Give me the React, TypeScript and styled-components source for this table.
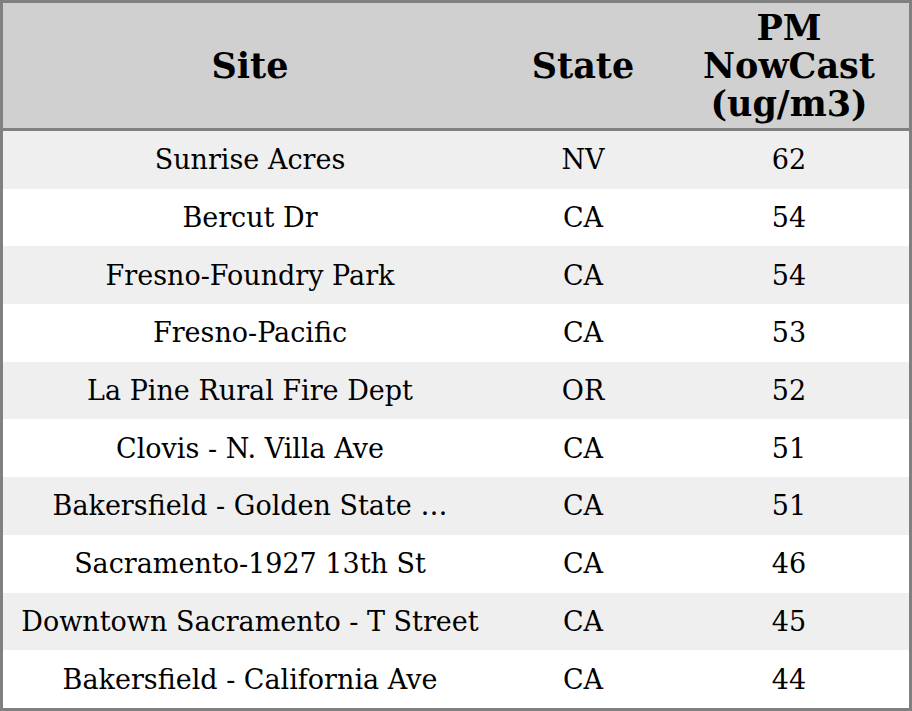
import styled, { createGlobalStyle } from 'styled-components';

const rows = [
  { site: 'Sunrise Acres', state: 'NV', pm: 62 },
  { site: 'Bercut Dr', state: 'CA', pm: 54 },
  { site: 'Fresno-Foundry Park', state: 'CA', pm: 54 },
  { site: 'Fresno-Pacific', state: 'CA', pm: 53 },
  { site: 'La Pine Rural Fire Dept', state: 'OR', pm: 52 },
  { site: 'Clovis - N. Villa Ave', state: 'CA', pm: 51 },
  { site: 'Bakersfield - Golden State …', state: 'CA', pm: 51 },
  { site: 'Sacramento-1927 13th St', state: 'CA', pm: 46 },
  { site: 'Downtown Sacramento - T Street', state: 'CA', pm: 45 },
  { site: 'Bakersfield - California Ave', state: 'CA', pm: 44 },
];

export default function App() {
  return (
    <>
      <GlobalStyle />
      <Table>
        <colgroup>
          <col style={{ width: 494 }} />
          <col style={{ width: 172 }} />
          <col />
        </colgroup>
        <thead>
          <tr>
            <HeadCell>Site</HeadCell>
            <HeadCell>State</HeadCell>
            <HeadCell>
              PM
              <br />
              NowCast
              <br />
              (ug/m3)
            </HeadCell>
          </tr>
        </thead>
        <tbody>
          {rows.map((row, i) => (
            <Row key={row.site} $striped={i % 2 === 0}>
              <Cell>{row.site}</Cell>
              <Cell>{row.state}</Cell>
              <Cell>{row.pm}</Cell>
            </Row>
          ))}
        </tbody>
      </Table>
    </>
  );
}

const GlobalStyle = createGlobalStyle`
  html, body {
    margin: 0;
    padding: 0;
    background: #fff;
  }
  body {
    font-family: 'DejaVu Serif', serif;
    color: #000;
  }
`;

const Table = styled.table`
  width: 912px;
  height: 711px;
  border-collapse: separate;
  border-spacing: 0;
  border: 3px solid #808080;
  table-layout: fixed;
`;

const HeadCell = styled.th`
  height: 125px;
  padding: 0;
  background: #d0d0d0;
  border-bottom: 3px solid #808080;
  font-size: 35px;
  font-weight: bold;
  line-height: 38px;
  text-align: center;
  vertical-align: middle;
`;

const Row = styled.tr<{ $striped: boolean }>`
  background: ${(p) => (p.$striped ? '#efefef' : '#fff')};
`;

const Cell = styled.td`
  height: 57px;
  padding: 0;
  font-size: 27px;
  text-align: center;
  vertical-align: middle;
  white-space: nowrap;
`;
